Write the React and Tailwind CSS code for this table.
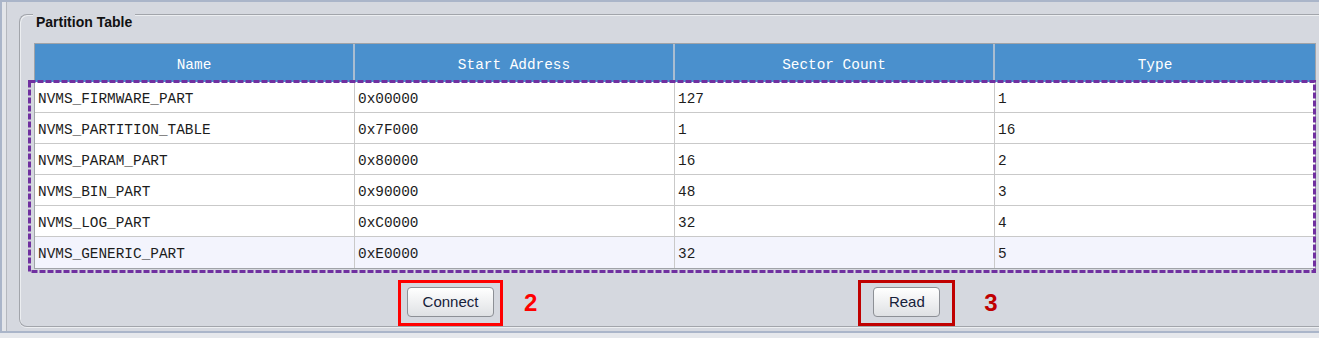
import React from 'react';

const rows = [
  ['NVMS_FIRMWARE_PART', '0x00000', '127', '1'],
  ['NVMS_PARTITION_TABLE', '0x7F000', '1', '16'],
  ['NVMS_PARAM_PART', '0x80000', '16', '2'],
  ['NVMS_BIN_PART', '0x90000', '48', '3'],
  ['NVMS_LOG_PART', '0xC0000', '32', '4'],
  ['NVMS_GENERIC_PART', '0xE0000', '32', '5'],
];

const headers = ['Name', 'Start Address', 'Sector Count', 'Type'];

function Btn({ children }) {
  return (
    <button
      type="button"
      className="h-[30px] rounded-[4px] border border-[#8d9096] bg-gradient-to-b from-[#ffffff] to-[#dfe1e4] text-[15px] text-[#16213a] shadow-[inset_0_1px_0_#ffffff]"
    >
      {children}
    </button>
  );
}

export default function App() {
  return (
    <div className="relative h-[338px] w-[1319px] overflow-hidden bg-[#e6e8ec] font-['Liberation_Sans',Arial,sans-serif]">
      {/* outer panel */}
      <div className="h-[333px] border-t-2 border-l-2 border-b-2 border-r-4 border-[#aab5c9]">
        <div className="flex h-full border-l-[4px] border-[#e3e5e9]">
          <div className="h-full flex-1 border-l border-[#b5b8be] bg-[#d5d8df]">
            {/* group box */}
            <div className="relative ml-[12px] mt-[12px] h-[313px] w-[1320px] rounded-tl-[8px] rounded-bl-[8px] border-t border-l border-b border-[#a2a5ab] shadow-[inset_1px_1px_0_#eceef1,0_1px_0_#eceef1]">
              <span className="absolute left-[13px] top-[-1px] bg-[#d5d8df] px-[3px] text-[14px] font-bold leading-[16px] text-[#111]">
                Partition Table
              </span>

              {/* table */}
              <div className="ml-[14px] mt-[28px] w-[1282px] border border-[#a0a3a8] bg-white font-['Liberation_Mono','Courier_New',monospace] text-[14.4px]">
                <div className="grid h-[38px] grid-cols-[320px_320px_320px_320px] bg-[#4a90cd]">
                  {headers.map((h, i) => (
                    <div
                      key={h}
                      className={`flex items-center justify-center pt-[5px] text-white ${i < 3 ? 'border-r-2 border-[#a9bdd1]' : ''}`}
                    >
                      {h}
                    </div>
                  ))}
                </div>
                {rows.map((r, ri) => (
                  <div
                    key={r[0]}
                    className={`grid h-[31px] grid-cols-[320px_320px_320px_320px] ${ri < 5 ? 'border-b border-[#c9c9c9] bg-white' : 'bg-[#f3f4fd]'}`}
                  >
                    {r.map((c, ci) => (
                      <div
                        key={ci}
                        className={`flex items-center pl-[3px] pt-[5px] text-[#1c1c1c] ${ci < 3 ? 'border-r border-[#c9c9c9]' : ''}`}
                      >
                        {c}
                      </div>
                    ))}
                  </div>
                ))}
              </div>

              {/* buttons */}
              <div className="mt-[11px] flex items-center">
                <div className="ml-[378px] border-[3px] border-[#ff0000] px-[6px] pt-[4px] pb-[6px]">
                  <div className="w-[87px]">
                    <Btn>
                      <span className="block w-[85px]">Connect</span>
                    </Btn>
                  </div>
                </div>
                <span className="ml-[21px] text-[24px] font-bold leading-none text-[#ff0000]">2</span>
                <div className="ml-[321px] border-[3px] border-[#c00000] px-[12px] pt-[4px] pb-[6px]">
                  <Btn>
                    <span className="block w-[65px]">Read</span>
                  </Btn>
                </div>
                <span className="ml-[29px] text-[24px] font-bold leading-none text-[#c00000]">3</span>
              </div>
            </div>
          </div>
        </div>
      </div>

      {/* annotation: dashed selection */}
      <svg className="absolute left-[28px] top-[80px]" width="1288" height="193">
        <rect
          x="1.5"
          y="1.5"
          width="1285"
          height="190"
          fill="none"
          stroke="#7030a0"
          strokeWidth="3"
          strokeDasharray="6 2"
        />
      </svg>
    </div>
  );
}
